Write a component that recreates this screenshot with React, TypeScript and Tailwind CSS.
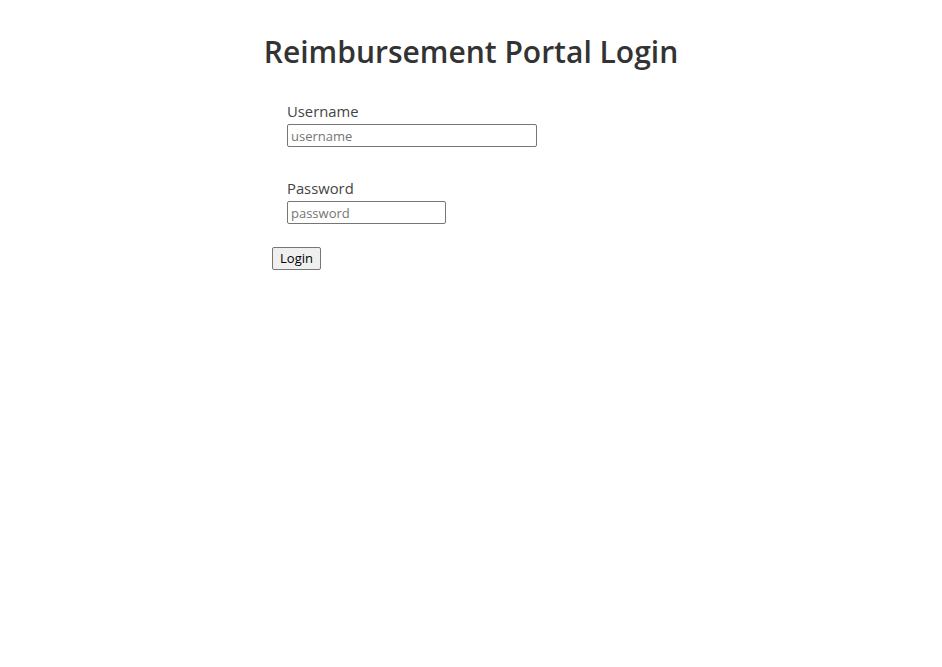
import React from "react";

export default function App() {
  return (
    <div
      className="min-h-[667px] bg-white text-[#333]"
      style={{ fontFamily: '"Open Sans", "Noto Sans", sans-serif' }}
    >
      <h1 className="pt-[28px] text-center text-[30px] font-semibold leading-[48px] text-[#333]">
        Reimbursement Portal Login
      </h1>
      <div className="mx-auto mt-[25px] w-[398px]">
        <div className="flex flex-col pl-[15px]">
          <label className="text-[14.8px] leading-[20px] text-[#444]">Username</label>
          <input
            type="text"
            placeholder="username"
            className="mt-[3px] h-[23px] w-[250px] rounded-[2px] border border-[#767676] px-[3px] text-[13px] text-black placeholder:text-[#757575] outline-none"
          />
        </div>
        <div className="mt-[31px] flex flex-col pl-[15px]">
          <label className="text-[14.8px] leading-[20px] text-[#444]">Password</label>
          <input
            type="password"
            placeholder="password"
            className="mt-[3px] h-[23px] w-[159px] rounded-[2px] border border-[#767676] px-[3px] text-[13px] text-black placeholder:text-[#757575] outline-none"
          />
        </div>
        <div className="mt-[21px]">
          <button className="h-[23px] w-[49px] rounded-[2px] border border-[#767676] bg-[#efefef] text-[13px] leading-none text-black">
            Login
          </button>
        </div>
      </div>
    </div>
  );
}
